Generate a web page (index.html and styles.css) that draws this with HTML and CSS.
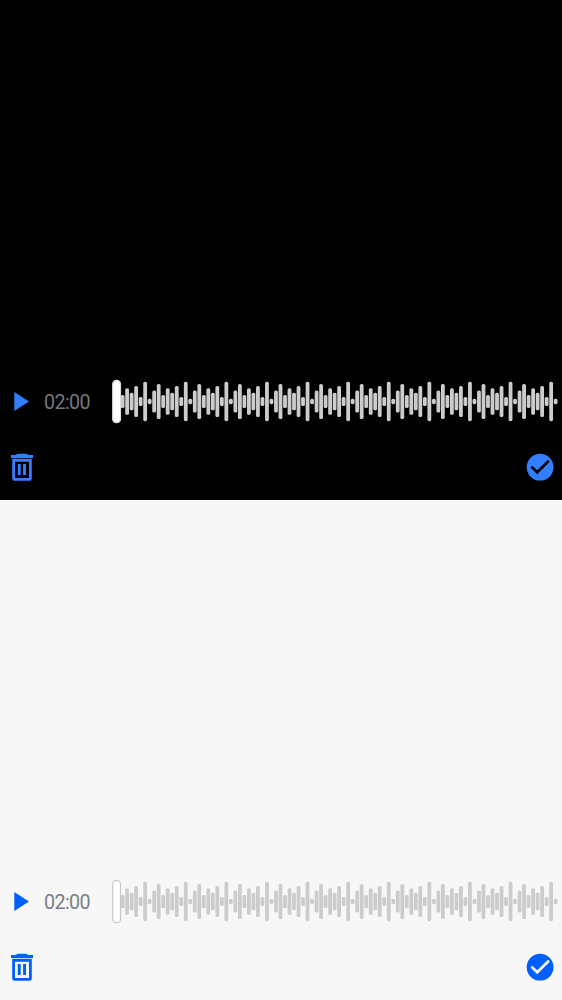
FILE: index.html
```
<!DOCTYPE html>
<html lang="en">
<head>
<meta charset="utf-8">
<title>Voice recording</title>
<link rel="stylesheet" href="styles.css">
</head>
<body>
<svg class="defs" width="0" height="0" aria-hidden="true">
  <symbol id="play" viewBox="0 0 15 19"><path d="M.3 0v19L15 9.5z"/></symbol>
  <symbol id="trash" viewBox="0 0 22 28"><path d="M5.3 1.9Q5.3.8 6.4.8h9.2q1.1 0 1.1 1.1H22v3H0v-3z"/><path fill-rule="evenodd" d="M1.2 5.8h19.6v19.8q0 2.2-2.2 2.2H3.4q-2.2 0-2.2-2.2zM4 8.8v16.1h14V8.8z"/><path d="M6.8 11h2.9v11H6.8zM12.1 11H15v11h-2.9z"/></symbol>
  <symbol id="check" viewBox="0 0 27 27"><circle cx="13.1" cy="13.2" r="13.4"/><path class="tick" d="M5.2 13.4l5 4.9L21.1 7.5"/></symbol>
</svg>
<main class="screen">
  <section class="panel dark">
    <div class="player">
      <button class="play" aria-label="Play"><svg width="15" height="19"><use href="#play"/></svg></button>
      <time class="duration">02:00</time>
      <svg class="wave" width="450" height="47"></svg>
    </div>
    <div class="actions">
      <button aria-label="Delete"><svg width="22" height="28"><use href="#trash"/></svg></button>
      <button aria-label="Send"><svg width="27" height="27"><use href="#check"/></svg></button>
    </div>
  </section>
  <section class="panel light">
    <div class="player">
      <button class="play" aria-label="Play"><svg width="15" height="19"><use href="#play"/></svg></button>
      <time class="duration">02:00</time>
      <svg class="wave" width="450" height="47"></svg>
    </div>
    <div class="actions">
      <button aria-label="Delete"><svg width="22" height="28"><use href="#trash"/></svg></button>
      <button aria-label="Send"><svg width="27" height="27"><use href="#check"/></svg></button>
    </div>
  </section>
</main>
<script src="wave.js"></script>
</body>
</html>
```
FILE: styles.css
```
* { box-sizing: border-box; }
body { margin: 0; font-family: Roboto, "Liberation Sans", sans-serif; }
.defs { position: absolute; }
.screen { display: grid; grid-template-rows: 500px 500px; }
.panel {
  display: flex;
  flex-direction: column;
  justify-content: flex-end;
  overflow: hidden;
  background: var(--bg);
  color: var(--accent);
}
.dark { --bg: #000; --accent: #337eff; --thumb-line: #dbdbdb; --text: #72767e; }
.light { --bg: #f7f7f7; --accent: #005fff; --thumb-line: #c8c8c8; --text: #7b7f87; }
button { display: flex; padding: 0; border: 0; background: none; color: inherit; }
svg { display: block; fill: currentColor; overflow: visible; }
symbol { overflow: visible; }
.player { display: flex; align-items: center; height: 47px; margin-bottom: 28px; }
.play { margin-left: 14px; }
.duration {
  width: 68px;
  margin-left: 15px;
  padding-top: 3px;
  font-size: 19.7px;
  font-weight: 400;
  line-height: 24px;
  letter-spacing: -0.6px;
  color: var(--text);
}
.wave { flex: none; }
.bar { fill: #ccc; }
.thumb { fill: #fff; stroke: var(--thumb-line); stroke-width: 1.2; }
.actions { display: flex; justify-content: space-between; align-items: flex-start; height: 28px; margin: 0 8px 19px 11px; }
.actions button:last-child { padding-top: 1px; }
.tick { fill: none; stroke: var(--bg); stroke-width: 2.7; stroke-linecap: round; stroke-linejoin: miter; }
```
FILE: wave.js
```
const NS = "http://www.w3.org/2000/svg";
const heights = [13, 26.5, 17.5, 31, 9, 39.4, 5.4, 22, 35];
const count = 97, pitch = 4.511, start = 10.6, middle = 23.5, width = 3.8;
const add = (parent, name, attrs) => {
  const el = document.createElementNS(NS, name);
  for (const key in attrs) el.setAttribute(key, attrs[key]);
  parent.appendChild(el);
};
document.querySelectorAll(".wave").forEach((wave) => {
  for (let i = 0; i < count; i++) {
    const height = heights[i % heights.length];
    add(wave, "rect", {
      class: "bar", x: start + i * pitch - width / 2, y: middle - height / 2, width, height, rx: 1.6,
    });
  }
  add(wave, "rect", { class: "thumb", x: 0.7, y: 2.3, width: 7.8, height: 42.4, rx: 3.8 });
});
```
